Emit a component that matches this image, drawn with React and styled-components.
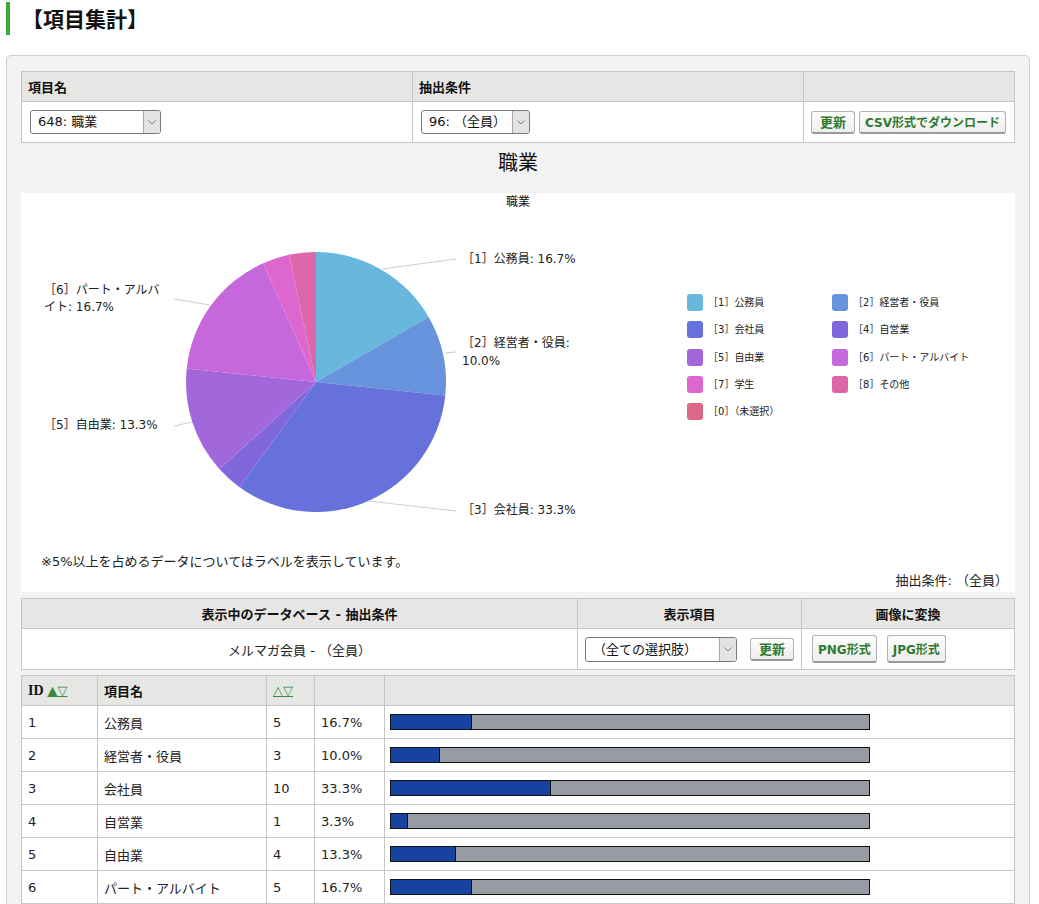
import React from 'react';
import styled, { createGlobalStyle } from 'styled-components';

const GlobalStyle = createGlobalStyle`
  body {
    margin: 0;
    background: #fff;
    color: #222;
    font-family: "DejaVu Sans", "Noto Sans CJK JP", sans-serif;
    font-size: 13px;
  }
`;

const PageTitle = styled.h1`
  margin: 2px 0 0 6px;
  height: 33px;
  line-height: 33px;
  padding-left: 12px;
  border-left: 4px solid #3bab37;
  font-family: "Noto Sans CJK JP", sans-serif;
  font-size: 21px;
  font-weight: bold;
  color: #111;
`;

const Panel = styled.div`
  box-sizing: border-box;
  width: 1024px;
  margin: 20px 0 0 6px;
  padding: 15px 14px;
  background: #f3f3f3;
  border: 1px solid #cfcfcf;
  border-radius: 5px;
`;

const Table = styled.table`
  width: 100%;
  border-collapse: collapse;
  table-layout: fixed;
  background: #fff;
  margin-top: ${(p) => p.$gap || 0}px;
`;

// widths are given as the column's outer size; padding and half borders take 13px
const Th = styled.th`
  height: 29px;
  padding: 0 6px;
  background: #e6e7e5;
  border: 1px solid #c6c6c6;
  font-size: 13px;
  font-weight: bold;
  color: #111;
  text-align: ${(p) => p.$align || 'left'};
  width: ${(p) => (p.$w ? `${p.$w - 13}px` : 'auto')};
`;

const Td = styled.td`
  height: ${(p) => p.$h || 32}px;
  padding: 0 ${(p) => p.$px ?? 6}px;
  border: 1px solid #c6c6c6;
  text-align: ${(p) => p.$align || 'left'};
  white-space: nowrap;
`;

const CellRow = styled.div`
  display: flex;
  align-items: center;
  gap: ${(p) => p.$gap || 5}px;
`;

const SelectBox = styled.div`
  box-sizing: border-box;
  display: inline-flex;
  width: ${(p) => p.$w}px;
  height: ${(p) => p.$h || 24}px;
  border: 1px solid #7a7a7a;
  border-radius: 3px;
  background: #fff;
  overflow: hidden;
`;

const SelectLabel = styled.span`
  flex: 1;
  padding-left: 7px;
  line-height: ${(p) => (p.$h || 24) - 2}px;
  font-size: 13px;
  color: #111;
`;

const SelectArrow = styled.span`
  flex: none;
  width: 16px;
  display: flex;
  align-items: center;
  justify-content: center;
  background: #e3e3e3;
  border-left: 1px solid #a8a8a8;
`;

const Button = styled.button`
  box-sizing: border-box;
  height: ${(p) => p.$h || 23}px;
  padding: 0 ${(p) => p.$px || 8}px;
  font-family: "DejaVu Sans", "Noto Sans CJK JP", sans-serif;
  font-size: ${(p) => p.$fs || 13}px;
  font-weight: bold;
  color: #2e7b30;
  background: linear-gradient(#fdfdfd, #eeeeee);
  border: 1px solid #b3b3b3;
  border-bottom: 2px solid #9a9a9a;
  border-radius: 3px;
  white-space: nowrap;
`;

const SectionTitle = styled.div`
  padding: 7px 0 19px;
  text-align: center;
  font-family: "Noto Sans CJK JP", sans-serif;
  font-size: 20px;
  line-height: 24px;
  color: #111;
`;

const ChartBox = styled.div`
  box-sizing: border-box;
  height: 399px;
  background: #fff;
  display: flex;
  flex-direction: column;
`;

const ChartCaption = styled.div`
  height: 18px;
  line-height: 18px;
  text-align: center;
  font-size: 12px;
  color: #111;
`;

const ChartBody = styled.div`
  display: flex;
  align-items: flex-start;
  height: 342px;
`;

const PieSvg = styled.svg`
  flex: none;
  display: block;
`;

const PieLabel = styled.text`
  font-family: "DejaVu Sans", "Noto Sans CJK JP", sans-serif;
  font-size: 12px;
  fill: #222;
`;

const Legend = styled.div`
  display: grid;
  grid-template-columns: 145px 145px;
  grid-auto-rows: 27.3px;
  margin: 83px 0 0 26px;
  font-size: 10px;
  color: #222;
`;

const LegendItem = styled.div`
  display: flex;
  align-items: flex-start;
  gap: 5px;
  line-height: 17px;
`;

const Swatch = styled.span`
  flex: none;
  width: 16px;
  height: 17px;
  border-radius: 3px;
  background: ${(p) => p.$color};
`;

const ChartNote = styled.div`
  padding-left: 20px;
  font-size: 13px;
  line-height: 18px;
`;

const ChartCondition = styled.div`
  margin-top: 1px;
  padding-right: 7px;
  text-align: right;
  font-size: 13px;
  line-height: 18px;
`;

const IdLabel = styled.span`
  font-family: "Liberation Serif", serif;
  font-weight: bold;
  font-size: 14px;
`;

const SortLink = styled.a`
  margin-left: ${(p) => p.$ml ?? 4}px;
  color: #3b8a3b;
  font-weight: normal;
  font-size: 13px;
  text-decoration: underline;
`;

const BarTrack = styled.div`
  box-sizing: border-box;
  display: flex;
  width: 480px;
  height: 16px;
  margin-left: -1px;
  border: 1px solid #111;
  background: #979ba3;
`;

const BarFill = styled.div`
  height: 100%;
  background: #1743a0;
  border-right: 1px solid #111;
`;

const COLORS = ['#68b7dc', '#6794dc', '#6771dc', '#8067dc', '#a367dc', '#c767dc', '#dc67ce', '#dc67ab', '#dc6788'];

const ITEMS = [
  { id: 1, name: '公務員', n: 5, pct: '16.7%' },
  { id: 2, name: '経営者・役員', n: 3, pct: '10.0%' },
  { id: 3, name: '会社員', n: 10, pct: '33.3%' },
  { id: 4, name: '自営業', n: 1, pct: '3.3%' },
  { id: 5, name: '自由業', n: 4, pct: '13.3%' },
  { id: 6, name: 'パート・アルバイト', n: 5, pct: '16.7%' },
  { id: 7, name: '学生', n: 1, pct: '3.3%' },
  { id: 8, name: 'その他', n: 1, pct: '3.3%' },
  { id: 0, name: '（未選択）', n: 0, pct: '0.0%' },
];

const TOTAL = 30;

function polar(cx, cy, r, deg) {
  const a = ((deg - 90) * Math.PI) / 180;
  return [cx + r * Math.cos(a), cy + r * Math.sin(a)];
}

function slicePath(cx, cy, r, a0, a1) {
  const [x0, y0] = polar(cx, cy, r, a0);
  const [x1, y1] = polar(cx, cy, r, a1);
  const large = a1 - a0 > 180 ? 1 : 0;
  return `M${cx},${cy} L${x0},${y0} A${r},${r} 0 ${large} 1 ${x1},${y1} Z`;
}

function Chevron() {
  return (
    <svg width="8" height="5" viewBox="0 0 8 5">
      <path d="M0.5 0.5 L4 4 L7.5 0.5" fill="none" stroke="#777" strokeWidth="1" />
    </svg>
  );
}

function Select({ w, h, children }) {
  return (
    <SelectBox $w={w} $h={h}>
      <SelectLabel $h={h}>{children}</SelectLabel>
      <SelectArrow>
        <Chevron />
      </SelectArrow>
    </SelectBox>
  );
}

function PieChart() {
  const cx = 295;
  const cy = 171;
  const r = 130;
  let angle = 0;
  const slices = ITEMS.map((item, i) => {
    const a0 = angle;
    angle += (item.n / TOTAL) * 360;
    return { ...item, a0, a1: angle, color: COLORS[i] };
  }).filter((s) => s.n > 0);

  return (
    <PieSvg width="640" height="342" viewBox="0 0 640 342">
      {slices.map((s) => (
        <path key={s.id} d={slicePath(cx, cy, r, s.a0, s.a1)} fill={s.color} />
      ))}
      <g stroke="#cfcfcf" strokeWidth="1" fill="none">
        <path d="M361 58 L435 48" />
        <path d="M424 142 L435 141" />
        <path d="M347 290 L435 300" />
        <path d="M153 88 L189 94" />
        <path d="M153 215 L171 211" />
      </g>
      <PieLabel x="441" y="52">［1］公務員: 16.7%</PieLabel>
      <PieLabel x="441" y="136">［2］経営者・役員:</PieLabel>
      <PieLabel x="441" y="154">10.0%</PieLabel>
      <PieLabel x="441" y="303">［3］会社員: 33.3%</PieLabel>
      <PieLabel x="23" y="83">［6］パート・アルバ</PieLabel>
      <PieLabel x="23" y="100">イト: 16.7%</PieLabel>
      <PieLabel x="23" y="218">［5］自由業: 13.3%</PieLabel>
    </PieSvg>
  );
}

export default function App() {
  return (
    <>
      <GlobalStyle />
      <PageTitle>【項目集計】</PageTitle>
      <Panel>
        <Table>
          <thead>
            <tr>
              <Th $w={391}>項目名</Th>
              <Th $w={391}>抽出条件</Th>
              <Th />
            </tr>
          </thead>
          <tbody>
            <tr>
              <Td $h={40} $px={8}>
                <Select w={131}>648: 職業</Select>
              </Td>
              <Td $h={40} $px={8}>
                <Select w={109}>96: （全員）</Select>
              </Td>
              <Td $h={40} $px={7}>
                <CellRow $gap={4}>
                  <Button>更新</Button>
                  <Button $fs={12} $px={5}>CSV形式でダウンロード</Button>
                </CellRow>
              </Td>
            </tr>
          </tbody>
        </Table>

        <SectionTitle>職業</SectionTitle>

        <ChartBox>
          <ChartCaption>職業</ChartCaption>
          <ChartBody>
            <PieChart />
            <Legend>
              {ITEMS.map((item, i) => (
                <LegendItem key={item.id}>
                  <Swatch $color={COLORS[i]} />
                  <span>［{item.id}］{item.name}</span>
                </LegendItem>
              ))}
            </Legend>
          </ChartBody>
          <ChartNote>※5%以上を占めるデータについてはラベルを表示しています。</ChartNote>
          <ChartCondition>抽出条件: （全員）</ChartCondition>
        </ChartBox>

        <Table $gap={6}>
          <thead>
            <tr>
              <Th $w={556} $align="center">表示中のデータベース - 抽出条件</Th>
              <Th $w={224} $align="center">表示項目</Th>
              <Th $align="center">画像に変換</Th>
            </tr>
          </thead>
          <tbody>
            <tr>
              <Td $h={40} $align="center">メルマガ会員 - （全員）</Td>
              <Td $h={40} $px={7}>
                <CellRow $gap={13}>
                  <Select w={153} h={25}>（全ての選択肢）</Select>
                  <Button>更新</Button>
                </CellRow>
              </Td>
              <Td $h={40} $px={10}>
                <CellRow $gap={10}>
                  <Button $h={28} $fs={12} $px={5}>PNG形式</Button>
                  <Button $h={28} $fs={12} $px={5}>JPG形式</Button>
                </CellRow>
              </Td>
            </tr>
          </tbody>
        </Table>

        <Table $gap={5}>
          <thead>
            <tr>
              <Th $w={76}>
                <IdLabel>ID</IdLabel>
                <SortLink href="#">▲▽</SortLink>
              </Th>
              <Th $w={169}>項目名</Th>
              <Th $w={48}>
                <SortLink href="#" $ml={0}>△▽</SortLink>
              </Th>
              <Th $w={70} />
              <Th />
            </tr>
          </thead>
          <tbody>
            {ITEMS.map((item) => (
              <tr key={item.id}>
                <Td>{item.id}</Td>
                <Td>{item.name}</Td>
                <Td>{item.n}</Td>
                <Td>{item.pct}</Td>
                <Td>
                  <BarTrack>
                    <BarFill style={{ width: `${(item.n / TOTAL) * 478}px` }} />
                  </BarTrack>
                </Td>
              </tr>
            ))}
          </tbody>
        </Table>
      </Panel>
    </>
  );
}
